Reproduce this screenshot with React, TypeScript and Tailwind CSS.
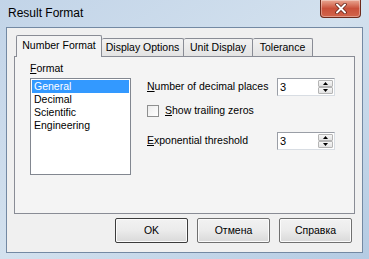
import React from "react";

const font = { fontFamily: '"Liberation Sans", Arial, sans-serif' };

function Spin({ value }: { value: string }) {
  return (
    <div className="w-[58px] h-[18px] bg-white border border-[#9a9ea6] border-b-[#d8dde3] border-r-[#d8dde3] flex items-stretch">
      <div className="flex-1 pl-[2px] text-[11px] leading-[16px] text-black">{value}</div>
      <div className="w-[16px] flex flex-col py-[1px] pr-[1px] gap-0">
        <div className="flex-1 border border-[#b5b5b5] bg-gradient-to-b from-[#f6f6f6] to-[#e3e3e3] flex items-center justify-center rounded-[1px]">
          <svg width="5" height="3" viewBox="0 0 5 3"><path d="M2.5 0 L5 3 L0 3 Z" fill="#000" /></svg>
        </div>
        <div className="flex-1 border border-[#b5b5b5] bg-gradient-to-b from-[#f6f6f6] to-[#e3e3e3] flex items-center justify-center rounded-[1px]">
          <svg width="5" height="3" viewBox="0 0 5 3"><path d="M0 0 L5 0 L2.5 3 Z" fill="#000" /></svg>
        </div>
      </div>
    </div>
  );
}

function Btn({ label, def }: { label: string; def?: boolean }) {
  return (
    <div
      className={
        "w-[73px] h-[25px] rounded-[2px] border flex items-center justify-center text-[10.5px] text-black bg-gradient-to-b from-[#f2f2f2] via-[#ebebeb] to-[#d9d9d9] " +
        (def ? "border-[#3c3c3c] shadow-[inset_0_0_0_1px_#fbfbfb]" : "border-[#707070] shadow-[inset_0_0_0_1px_#fbfbfb]")
      }
    >
      {label}
    </div>
  );
}

function Tab({ label, w, selected }: { label: string; w: number; selected?: boolean }) {
  if (selected) {
    return (
      <div
        style={{ width: w }}
        className="h-[22px] -mb-px relative z-10 bg-[#f4f4f4] border border-b-0 border-[#898c95] rounded-t-[2px] flex items-center justify-center text-[10.5px] text-black pb-[1px]"
      >
        {label}
      </div>
    );
  }
  return (
    <div
      style={{ width: w }}
      className="h-[18px] bg-gradient-to-b from-[#f2f2f2] to-[#e3e3e3] border border-b-0 border-l-0 border-[#898c95] rounded-t-[2px] flex items-center justify-center text-[10.5px] text-black"
    >
      {label}
    </div>
  );
}

export default function App() {
  return (
    <div
      style={font}
      className="w-[369px] h-[259px] flex flex-col bg-gradient-to-br from-[#c2d4e8] via-[#d3e1ee] to-[#b4cbe3] overflow-hidden"
    >
      {/* Title bar */}
      <div className="h-[27px] flex items-start shrink-0">
        <div className="pl-[8px] pt-[5px] text-[12px] leading-[16px] text-black">Result Format</div>
        <div className="ml-auto mr-[8px] w-[41px] h-[18px] rounded-b-[4px] border border-t-0 border-[#6d2a1c] bg-gradient-to-b from-[#e9a793] via-[#c9503a] to-[#d2654c] flex items-center justify-center shadow-[inset_0_0_0_1px_rgba(255,255,255,0.35)]">
          <svg width="12" height="11" viewBox="0 0 12 11">
            <path d="M2 1.5 L10 9.5 M10 1.5 L2 9.5" stroke="#5a1a10" strokeWidth="3.4" strokeLinecap="round" />
            <path d="M2 1.5 L10 9.5 M10 1.5 L2 9.5" stroke="#ffffff" strokeWidth="2" strokeLinecap="round" />
          </svg>
        </div>
      </div>

      {/* Client area */}
      <div className="mx-[6px] mb-[6px] flex-1 border border-[#7389a3] bg-[#f0f0f0] flex flex-col pt-[7px] px-[7px]">
        {/* Tabs */}
        <div className="h-[21px] flex items-end pl-[2px]">
          <Tab label="Number Format" w={86} selected />
          <Tab label="Display Options" w={82} />
          <Tab label="Unit Display" w={69} />
          <Tab label="Tolerance" w={60} />
        </div>

        {/* Panel */}
        <div className="h-[158px] border border-[#898c95] bg-[#f4f4f4] flex">
          {/* Left: Format list */}
          <div className="pl-[15px] pt-[5px] flex flex-col">
            <div className="h-[13px] text-[10.5px] leading-[13px] text-black">
              <span className="underline">F</span>ormat
            </div>
            <div className="mt-[3px] w-[101px] h-[97px] bg-white border border-[#828790] p-[1px] flex flex-col text-[10.5px] leading-[13px] text-black">
              <div className="h-[13px] bg-[#3399ff] text-white pl-[2px]">General</div>
              <div className="h-[13px] pl-[2px]">Decimal</div>
              <div className="h-[13px] pl-[2px]">Scientific</div>
              <div className="h-[13px] pl-[2px]">Engineering</div>
            </div>
          </div>

          {/* Right: options */}
          <div className="ml-[16px] pt-[21px] w-[188px] flex flex-col text-[10.5px] text-black">
            <div className="h-[18px] flex items-center justify-between">
              <span>
                <span className="underline">N</span>umber of decimal places
              </span>
              <Spin value="3" />
            </div>
            <div className="mt-[8px] h-[13px] flex items-center">
              <div className="w-[12px] h-[12px] border border-[#8e8f8f] bg-gradient-to-br from-[#ececec] to-[#ffffff]" />
              <span className="ml-[6px]">
                <span className="underline">S</span>how trailing zeros
              </span>
            </div>
            <div className="mt-[15px] h-[18px] flex items-center justify-between">
              <span>
                <span className="underline">E</span>xponential threshold
              </span>
              <Spin value="3" />
            </div>
          </div>
        </div>

        {/* Buttons */}
        <div className="mt-[4px] flex justify-end gap-[9px] pr-[3px]">
          <Btn label="OK" def />
          <Btn label="Отмена" />
          <Btn label="Справка" />
        </div>
      </div>
    </div>
  );
}
